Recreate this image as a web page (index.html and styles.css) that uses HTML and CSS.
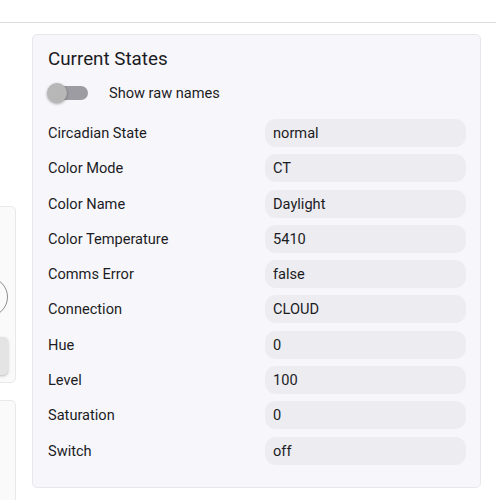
FILE: index.html
```html
<!DOCTYPE html>
<html lang="en">
<head>
    <meta charset="UTF-8">
    <meta name="viewport" content="width=device-width, initial-scale=1.0">
    <title>Current States</title>
    <link rel="stylesheet" href="styles.css">
</head>
<body>

<header class="topbar"></header>

<div class="layout">
    <!-- left column, mostly scrolled out of view -->
    <div class="side">
        <div class="side-card">
            <div class="dial"></div>
            <div class="side-btn"></div>
        </div>
        <div class="side-card side-card-tall"></div>
    </div>

    <div class="states-card">
        <h2>Current States</h2>

        <label class="raw-toggle">
            <span class="switch"><span class="thumb"></span></span>
            <span>Show raw names</span>
        </label>

        <div class="states">
            <div class="state-name">Circadian State</div><div class="state-value">normal</div>
            <div class="state-name">Color Mode</div><div class="state-value">CT</div>
            <div class="state-name">Color Name</div><div class="state-value">Daylight</div>
            <div class="state-name">Color Temperature</div><div class="state-value">5410</div>
            <div class="state-name">Comms Error</div><div class="state-value">false</div>
            <div class="state-name">Connection</div><div class="state-value">CLOUD</div>
            <div class="state-name">Hue</div><div class="state-value">0</div>
            <div class="state-name">Level</div><div class="state-value">100</div>
            <div class="state-name">Saturation</div><div class="state-value">0</div>
            <div class="state-name">Switch</div><div class="state-value">off</div>
        </div>
    </div>
</div>

</body>
</html>
```

FILE: styles.css
```css
body {
    margin: 0;
    font-family: Roboto, "Liberation Sans", Arial, sans-serif;
    color: #1c1c1f;
    background: #fff;
    overflow: hidden;
}

.topbar {
    height: 22px;
    border-bottom: 1px solid #dcdcdc;
}

.layout {
    display: flex;
    align-items: flex-start;
    gap: 16px;
    padding-top: 11px;
}

.side {
    width: 184px;
    margin-left: -168px;
    flex-shrink: 0;
    padding-top: 172px;
    display: flex;
    flex-direction: column;
    gap: 17px;
}

.side-card {
    height: 177px;
    box-sizing: border-box;
    background: #fafafa;
    border: 1px solid #e9e9e9;
    border-radius: 5px;
    padding: 70px 7px 0 8px;
    display: flex;
    flex-direction: column;
    align-items: flex-end;
}
.side-card-tall {
    height: 120px;
}

.dial {
    width: 40px;
    height: 40px;
    border-radius: 50%;
    border: 1px solid #8d8d8d;
    box-sizing: border-box;
}

.side-btn {
    width: 100%;
    height: 38px;
    margin-top: 20px;
    background: #e4e4e4;
    border-radius: 5px;
    box-shadow: 0 1px 3px rgba(0, 0, 0, 0.25);
}

.states-card {
    width: 449px;
    box-sizing: border-box;
    background: #f7f7fb;
    border: 1px solid #e7e7ed;
    border-radius: 5px;
    padding: 12px 14px 22px 15px;
}

h2 {
    margin: 0;
    font-size: 18.8px;
    font-weight: 400;
    line-height: 24px;
}

.raw-toggle {
    display: flex;
    align-items: center;
    gap: 21px;
    height: 24px;
    margin-top: 10px;
    font-size: 14.6px;
}

.switch {
    position: relative;
    width: 40px;
    height: 14px;
    border-radius: 7px;
    background: #9c9ca2;
}
.thumb {
    position: absolute;
    left: -1px;
    top: -3px;
    width: 20px;
    height: 20px;
    border-radius: 50%;
    background: #b7b7b7;
    box-shadow: 0 1px 3px rgba(0, 0, 0, 0.35);
}

.states {
    display: grid;
    grid-template-columns: 217px 201px;
    row-gap: 7.3px;
    margin-top: 14px;
    font-size: 14.6px;
}

.state-name,
.state-value {
    height: 28px;
    line-height: 28px;
}

.state-value {
    background: #ececf1;
    border-radius: 11px;
    padding-left: 8px;
}
```
